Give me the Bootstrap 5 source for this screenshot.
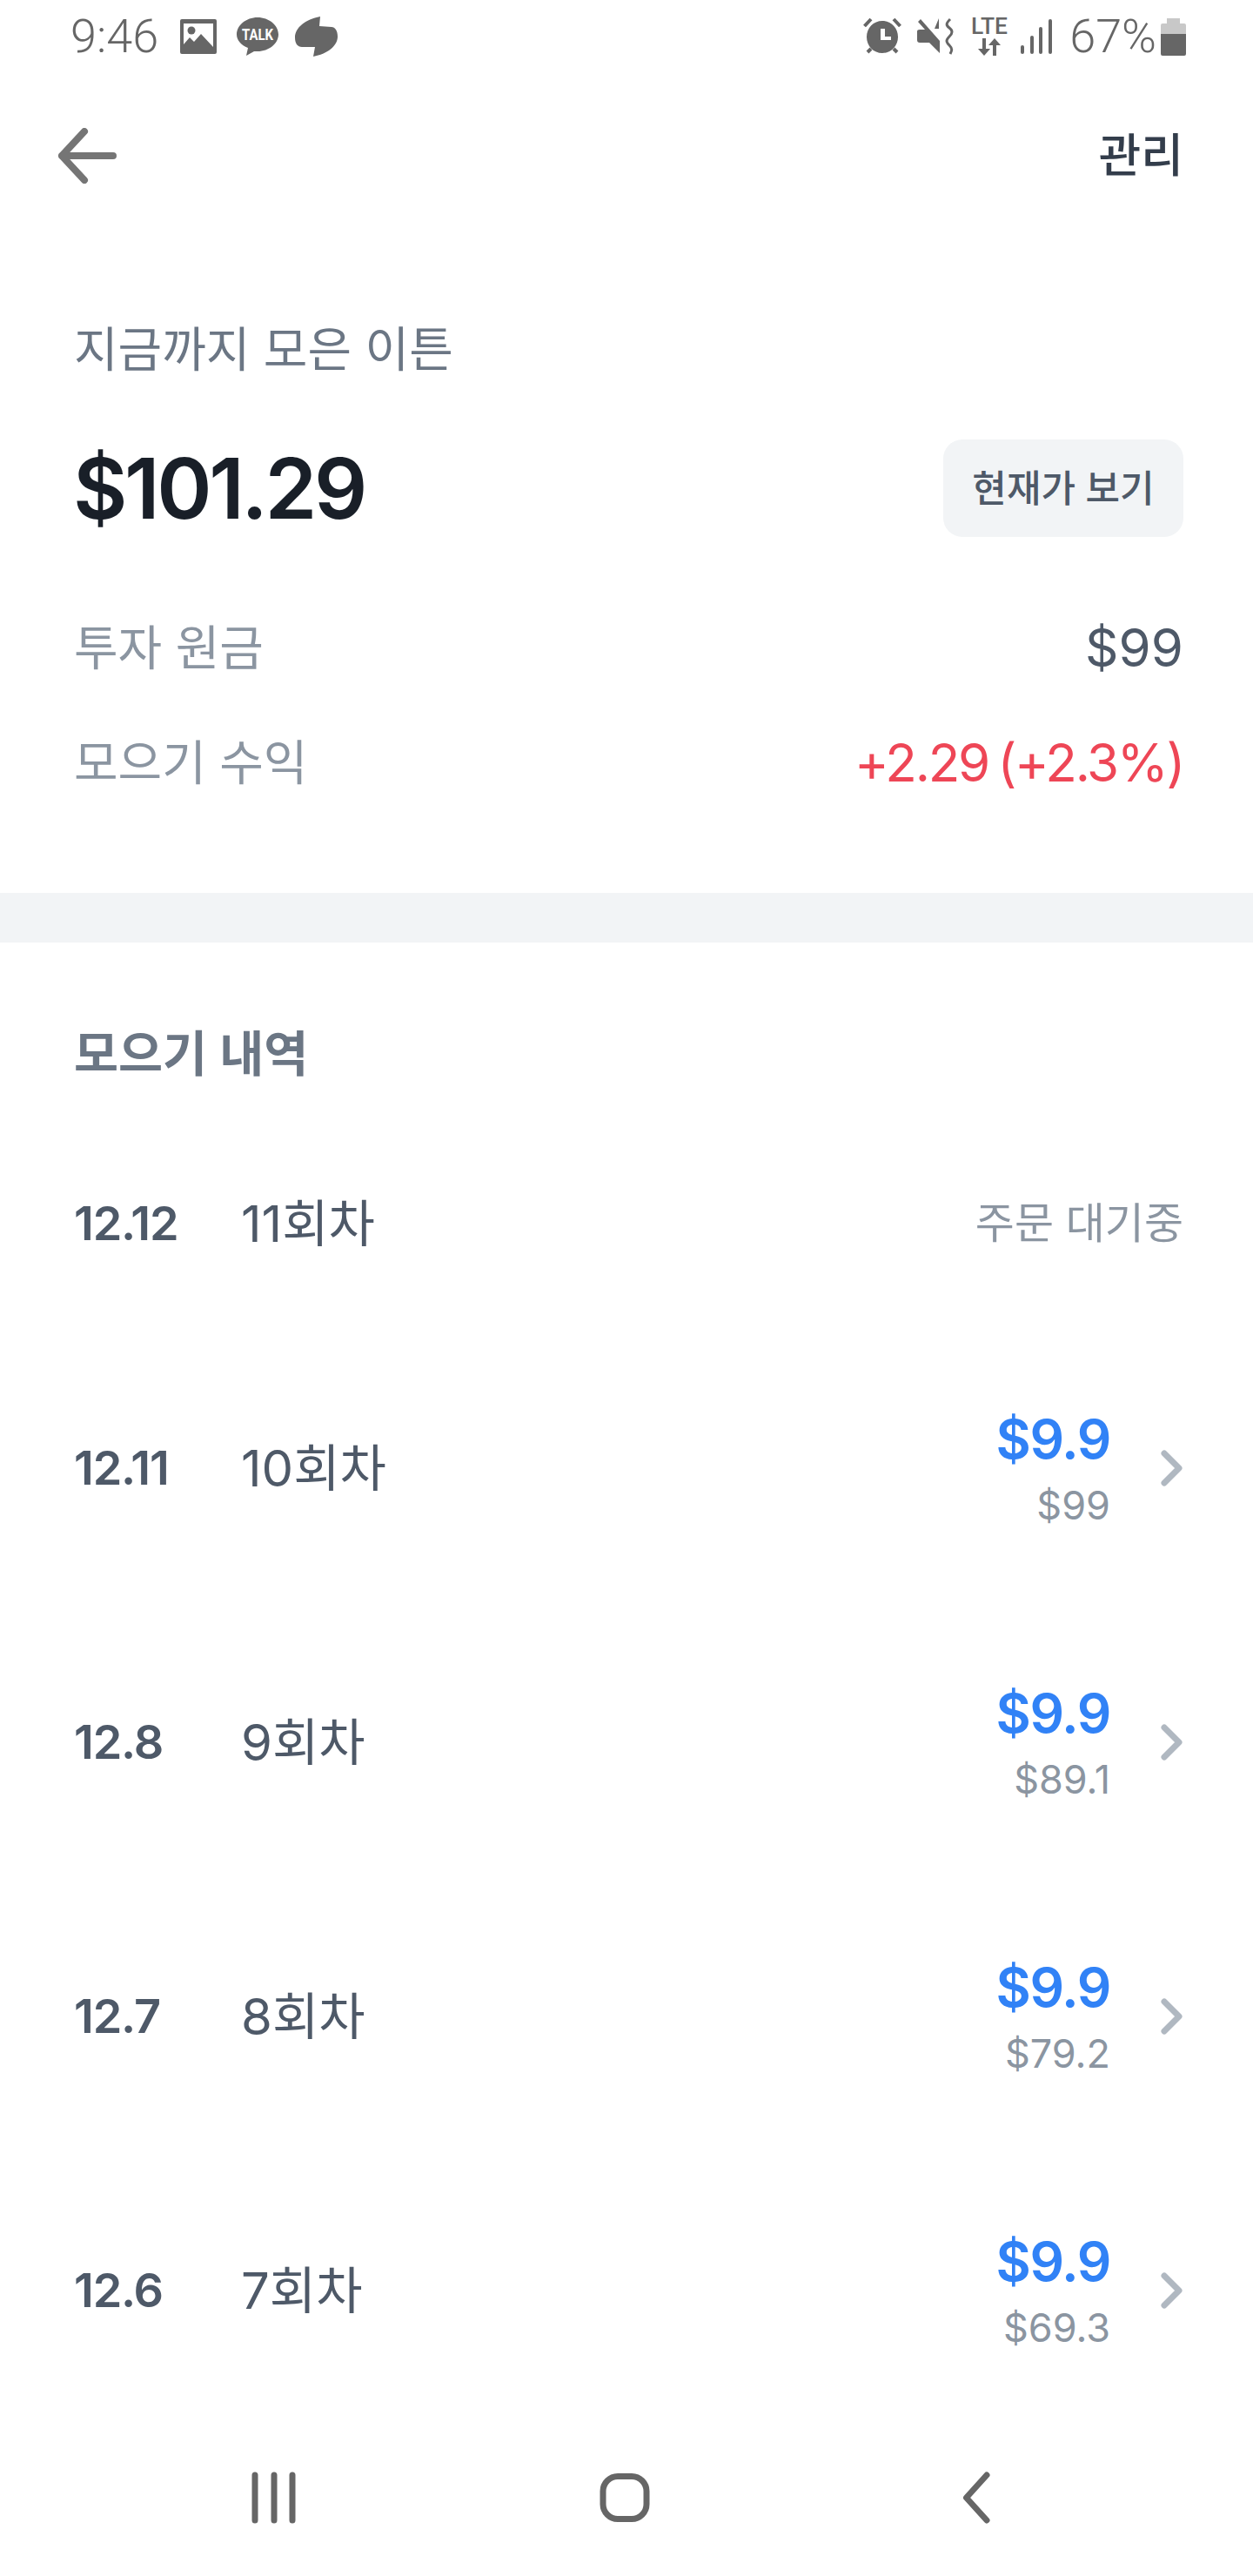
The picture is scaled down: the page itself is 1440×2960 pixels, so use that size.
<!DOCTYPE html>
<html lang="ko">
<head>
<meta charset="utf-8">
<title>모으기</title>
<link href="https://cdn.jsdelivr.net/npm/bootstrap@5.3.0/dist/css/bootstrap.min.css" rel="stylesheet">
<style>
html,body{margin:0;background:#fff}
body{font-family:Inter,"Noto Sans CJK KR",sans-serif}
.screen{width:1440px;height:2960px;overflow:hidden}
.statusline{height:84px;padding:0 77px 0 81px;color:#666;font-family:Roboto,sans-serif;font-weight:300;font-size:54px;line-height:1}
.statusline svg{display:block;fill:#666;overflow:visible}
.gap-a{margin-left:25px}.gap-b{margin-left:23px}.gap-c{margin-left:19px}
.gap-d{margin-left:18px}.gap-e{margin-left:20px}.gap-f{margin-left:15px}.gap-g{margin-left:5px}
.topline{height:190px;padding:0 80px 0 64px}
.manage{font-size:53px;font-weight:500;color:#333d4b;line-height:1}
.summary{padding:87px 80px 115px 85px}
.earned{font-size:55px;line-height:80px;color:#6b7684}
.amountline{margin-top:64px}
.amount{font-size:96px;font-weight:600;color:#191f28;letter-spacing:-3.4px;line-height:1;margin-left:-1px}
.viewbtn{width:276px;height:112px;border-radius:22px;background:#f2f4f6;border:0;color:#4e5968;font-size:43px;font-weight:500;padding:0;line-height:1}
.viewbtn:hover{background:#f2f4f6;color:#4e5968}
.kv{height:70px;font-size:55px}
.kv-first{margin-top:92px}
.kv-next{margin-top:62px}
.kv-key{color:#8b95a1}
.kv-val{color:#4e5968;font-size:60px}
.kv-red{color:#ee4656;font-size:60px;letter-spacing:-2.3px;word-spacing:-4px}
.band{height:57px;background:#f2f4f6}
.history{padding:93px 80px 0 85px;min-height:0;overflow:hidden}
.histtitle{font-size:55.5px;font-weight:600;color:#6b7684;line-height:70px;margin:0 0 36px}
.histrow{padding:92.5px 0}
.histdate{width:192px;font-size:54px;font-weight:600;color:#4e5968;line-height:62px;letter-spacing:-1.2px}
.histround{font-size:58px;color:#4e5968;line-height:62px}
.pending{font-size:49px;color:#8b95a1;line-height:62px}
.histsum{text-align:right;margin-right:58px;margin-bottom:-8px}
.histpay{font-size:62px;font-weight:600;color:#3182f6;line-height:64px;letter-spacing:-1.4px}
.histtotal{font-size:45px;color:#8b95a1;line-height:60px;margin-top:14px}
.navline{height:180px;gap:325px}
.navline svg{display:block}
</style>
</head>
<body>
<div class="screen d-flex flex-column">
  <div class="statusline flex-shrink-0 d-flex align-items-center justify-content-between">
    <div class="d-flex align-items-center">
      <span>9:46</span>
      <svg class="gap-a" width="42" height="40" viewBox="0 0 42 40"><path fill-rule="evenodd" d="M2 0h38a2 2 0 0 1 2 2v36a2 2 0 0 1-2 2H2a2 2 0 0 1-2-2V2a2 2 0 0 1 2-2zm2 5v24l7-8 5 5 8-9 14 15V5z"/><circle cx="13" cy="13" r="4.500"/></svg>
      <svg class="gap-b" width="48" height="44" viewBox="0 0 48 44"><path d="M24 0c13 0 24 9 24 19.500S37 39 24 39h-4l-9 5 2-9C5 32 0 26 0 19.500 0 9 11 0 24 0z"/><text x="24" y="26" text-anchor="middle" font-family="Roboto,sans-serif" font-weight="700" font-size="18" style="fill:#fff" textLength="36" lengthAdjust="spacingAndGlyphs">TALK</text></svg>
      <svg class="gap-c" width="50" height="46" viewBox="0 0 50 46"><path d="M29 0C12 3 0 13 0 24c0 7 3 11 8 11l15 0-2 11c16-3 28-12 28-23 0-7-3-11-7-11L28 11z"/></svg>
    </div>
    <div class="d-flex align-items-center">
      <svg width="44" height="42" viewBox="0 0 44 42"><path fill-rule="evenodd" d="M22 3c10 0 18 8 18 18.500S32 40 22 40 4 32 4 21.500 12 3 22 3zm-2 9v13h12v-4h-7v-9z"/><path d="M1.500 9L9 1M42.500 9L35 1M5 39l4-4M39 39l-4-4" fill="none" stroke="#666" stroke-width="4"/></svg>
      <svg class="gap-d" width="42" height="42" viewBox="0 0 42 42"><path d="M4 1L26 26V40L14 28H3Q0 28 0 25V15Q0 13 3 13H9L1 4zM25 0V12H20z"/><path d="M38 1C33 6 33 8 37 11S41 17 37 21 33 27 37 31 40 37 38 41" fill="none" stroke="#666" stroke-width="3"/></svg>
      <svg class="gap-e" width="42" height="44" viewBox="0 0 42 44"><text x="21" y="19" text-anchor="middle" font-family="Roboto,sans-serif" font-weight="500" font-size="25" textLength="42" lengthAdjust="spacingAndGlyphs">LTE</text><path d="M13 24h4v12h5l-7 8-7-8h5zM25 44h4V32h5l-7-8-7 8h5z"/></svg>
      <svg class="gap-f" width="36" height="40" viewBox="0 0 36 40"><rect x="0" y="30" width="4" height="10" rx="2"/><rect x="11" y="19" width="4" height="21" rx="2"/><rect x="21" y="9" width="4" height="31" rx="2"/><rect x="32" y="0" width="4" height="40" rx="2"/></svg>
      <span class="gap-e">67%</span>
      <svg class="gap-g" width="29" height="43" viewBox="0 0 29 43"><path d="M7 0h15v6h5a2 2 0 0 1 2 2v10H0V8a2 2 0 0 1 2-2h5z" style="fill:#c8c8c8"/><path d="M0 18h29v23a2 2 0 0 1-2 2H2a2 2 0 0 1-2-2z"/></svg>
    </div>
  </div>

  <div class="topline flex-shrink-0 d-flex align-items-center justify-content-between">
    <svg width="72" height="64" viewBox="0 0 72 64"><path d="M66 32H7M33 4L7 32l26 28" fill="none" stroke="#757575" stroke-width="8" stroke-linecap="round" stroke-linejoin="round"/></svg>
    <span class="manage">관리</span>
  </div>

  <section class="summary flex-shrink-0">
    <div class="earned">지금까지 모은 이튼</div>
    <div class="amountline d-flex align-items-center justify-content-between">
      <div class="amount">$101.29</div>
      <button type="button" class="btn viewbtn">현재가 보기</button>
    </div>
    <div class="kv kv-first d-flex align-items-center justify-content-between">
      <span class="kv-key">투자 원금</span><span class="kv-val">$99</span>
    </div>
    <div class="kv kv-next d-flex align-items-center justify-content-between">
      <span class="kv-key">모으기 수익</span><span class="kv-red">+2.29 (+2.3%)</span>
    </div>
  </section>

  <div class="band flex-shrink-0"></div>

  <section class="history flex-grow-1">
    <h2 class="histtitle">모으기 내역</h2>
    <div class="histrow d-flex align-items-center">
      <div class="histdate">12.12</div><div class="histround">11회차</div>
      <div class="pending ms-auto">주문 대기중</div>
    </div>
    <div class="histrow d-flex align-items-center">
      <div class="histdate">12.11</div><div class="histround">10회차</div>
      <div class="histsum ms-auto"><div class="histpay">$9.9</div><div class="histtotal">$99</div></div>
      <svg width="26" height="42" viewBox="0 0 26 42"><path d="M4 4l17 17L4 38" fill="none" stroke="#b0b8c1" stroke-width="7" stroke-linecap="round" stroke-linejoin="round"/></svg>
    </div>
    <div class="histrow d-flex align-items-center">
      <div class="histdate">12.8</div><div class="histround">9회차</div>
      <div class="histsum ms-auto"><div class="histpay">$9.9</div><div class="histtotal">$89.1</div></div>
      <svg width="26" height="42" viewBox="0 0 26 42"><path d="M4 4l17 17L4 38" fill="none" stroke="#b0b8c1" stroke-width="7" stroke-linecap="round" stroke-linejoin="round"/></svg>
    </div>
    <div class="histrow d-flex align-items-center">
      <div class="histdate">12.7</div><div class="histround">8회차</div>
      <div class="histsum ms-auto"><div class="histpay">$9.9</div><div class="histtotal">$79.2</div></div>
      <svg width="26" height="42" viewBox="0 0 26 42"><path d="M4 4l17 17L4 38" fill="none" stroke="#b0b8c1" stroke-width="7" stroke-linecap="round" stroke-linejoin="round"/></svg>
    </div>
    <div class="histrow d-flex align-items-center">
      <div class="histdate">12.6</div><div class="histround">7회차</div>
      <div class="histsum ms-auto"><div class="histpay">$9.9</div><div class="histtotal">$69.3</div></div>
      <svg width="26" height="42" viewBox="0 0 26 42"><path d="M4 4l17 17L4 38" fill="none" stroke="#b0b8c1" stroke-width="7" stroke-linecap="round" stroke-linejoin="round"/></svg>
    </div>
  </section>

  <nav class="navline flex-shrink-0 d-flex align-items-center justify-content-center">
    <svg width="80" height="60" viewBox="0 0 80 60"><path d="M18 4v52M40 4v52M61 4v52" fill="none" stroke="#666" stroke-width="7" stroke-linecap="round"/></svg>
    <svg width="80" height="60" viewBox="0 0 80 60"><rect x="13" y="5.500" width="50" height="49" rx="17" fill="none" stroke="#666" stroke-width="7"/></svg>
    <svg width="80" height="60" viewBox="0 0 80 60"><path d="M49 4L25.500 30 49 56" fill="none" stroke="#666" stroke-width="7" stroke-linecap="round" stroke-linejoin="round"/></svg>
  </nav>
</div>
</body>
</html>
